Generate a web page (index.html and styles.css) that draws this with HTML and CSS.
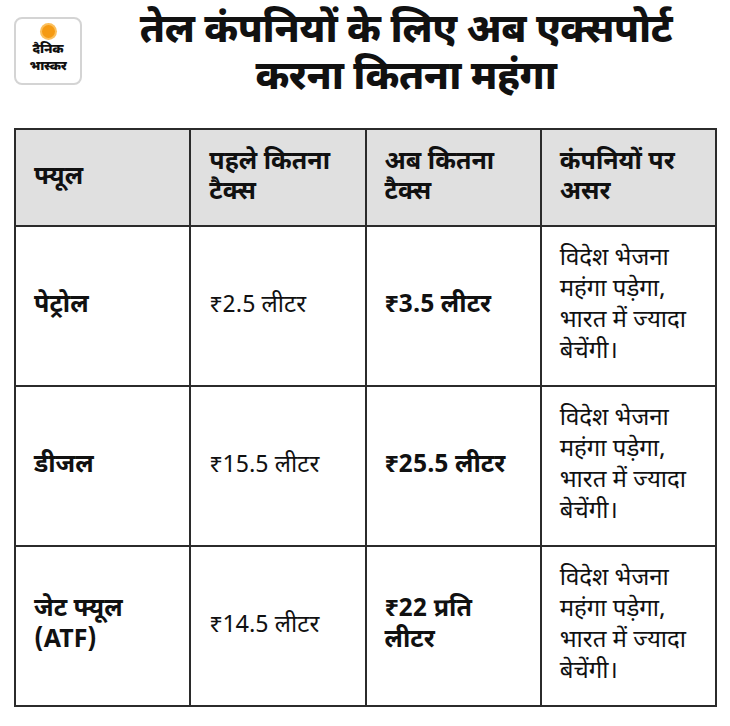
FILE: index.html
```html
<!DOCTYPE html>
<html lang="hi">
<head>
<meta charset="utf-8">
<link rel="stylesheet" href="styles.css">
</head>
<body>
<div class="page">
  <header class="top">
    <div class="logo">
      <span class="sun"></span>
      <span class="logo-text">दैनिक</span>
      <span class="logo-text">भास्कर</span>
    </div>
    <h1 class="title">तेल कंपनियों के लिए अब एक्सपोर्ट<br>करना कितना महंगा</h1>
  </header>
  <table class="tax">
    <thead>
      <tr>
        <th>फ्यूल</th>
        <th>पहले कितना टैक्स</th>
        <th>अब कितना टैक्स</th>
        <th>कंपनियों पर असर</th>
      </tr>
    </thead>
    <tbody>
      <tr>
        <td class="b">पेट्रोल</td>
        <td>₹2.5 लीटर</td>
        <td class="b">₹3.5 लीटर</td>
        <td class="effect">विदेश भेजना महंगा पड़ेगा, भारत में ज्यादा बेचेंगी।</td>
      </tr>
      <tr>
        <td class="b">डीजल</td>
        <td>₹15.5 लीटर</td>
        <td class="b">₹25.5 लीटर</td>
        <td class="effect">विदेश भेजना महंगा पड़ेगा, भारत में ज्यादा बेचेंगी।</td>
      </tr>
      <tr>
        <td class="b">जेट फ्यूल (ATF)</td>
        <td>₹14.5 लीटर</td>
        <td class="b">₹22 प्रति लीटर</td>
        <td class="effect">विदेश भेजना महंगा पड़ेगा, भारत में ज्यादा बेचेंगी।</td>
      </tr>
    </tbody>
  </table>
</div>
</body>
</html>
```

FILE: styles.css
```css
html, body {
  margin: 0;
  padding: 0;
  background: #ffffff;
}
body {
  font-family: "Noto Sans Devanagari", "Noto Sans", sans-serif;
  color: #111111;
}
.page {
  width: 730px;
  height: 726px;
  padding: 17px 14px 0 14px;
  box-sizing: border-box;
}
.top {
  display: flex;
  align-items: flex-start;
  height: 111px;
}
.logo {
  width: 68px;
  height: 68px;
  box-sizing: border-box;
  border: 2px solid #d4d4d4;
  border-radius: 8px;
  display: flex;
  flex-direction: column;
  align-items: center;
  padding-top: 6px;
  flex-shrink: 0;
}
.sun {
  width: 13px;
  height: 13px;
  flex-shrink: 0;
  border-radius: 50%;
  background: #f59a12;
  box-shadow: 0 0 0 2px #fbbf5c;
  margin-bottom: 3px;
}
.logo-text {
  display: block;
  font-weight: 900;
  font-size: 13px;
  line-height: 17px;
  height: 17px;
  letter-spacing: -0.2px;
  color: #111;
}
.title {
  flex: 1;
  margin: -8px 0 0 14px;
  text-align: center;
  font-size: 40px;
  line-height: 47px;
  font-weight: 800;
  letter-spacing: -0.5px;
  color: #111;
}
.tax {
  width: 703px;
  border-collapse: collapse;
  table-layout: fixed;
}
.tax th, .tax td {
  border: 2px solid #2b2b2b;
  text-align: left;
  vertical-align: middle;
  padding: 0 20px 0 18px;
  font-size: 24px;
  line-height: 31px;
}
.tax th {
  background: #e0e0e0;
  font-weight: 700;
  font-size: 25px;
  line-height: 30px;
  height: 95px;
}
.tax td {
  height: 158px;
  font-weight: 400;
}
.tax td.b {
  font-weight: 700;
  font-size: 25px;
}
.tax td.effect {
  padding-left: 18px;
  padding-right: 10px;
}
```
